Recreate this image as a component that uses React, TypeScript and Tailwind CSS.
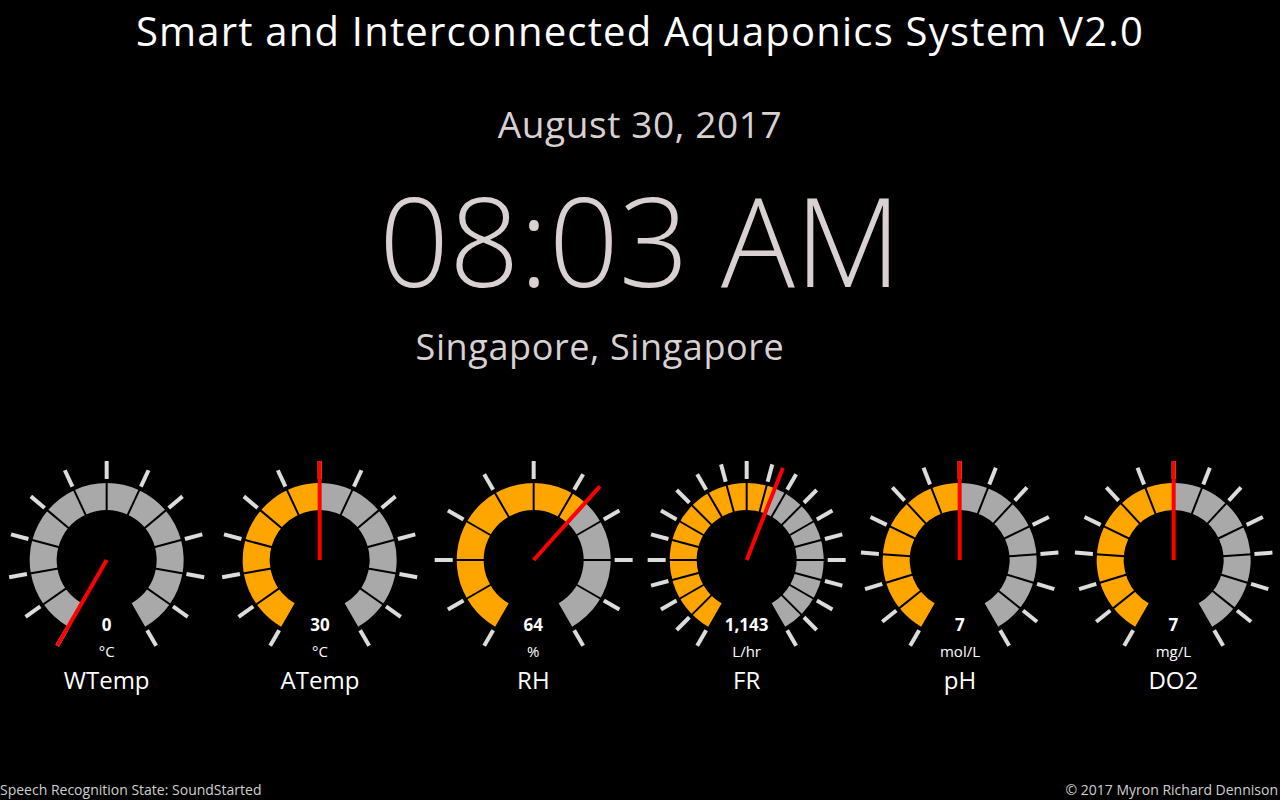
import React from "react";

type GaugeProps = {
  label: string;
  unit: string;
  value: number;
  min: number;
  max: number;
  n: number;
};

const CX = 106.667;
const CY = 100;
const R_IN = 50;
const R_OUT = 77;
const T_IN = 81;
const T_OUT = 99;

function polar(r: number, a: number): [number, number] {
  const rad = (a * Math.PI) / 180;
  return [CX + r * Math.sin(rad), CY - r * Math.cos(rad)];
}

function band(a0: number, a1: number): string {
  if (a1 - a0 < 0.01) return "";
  const large = a1 - a0 > 180 ? 1 : 0;
  const p0 = polar(R_OUT, a0);
  const p1 = polar(R_OUT, a1);
  const p2 = polar(R_IN, a1);
  const p3 = polar(R_IN, a0);
  return `M${p0[0]} ${p0[1]} A${R_OUT} ${R_OUT} 0 ${large} 1 ${p1[0]} ${p1[1]} L${p2[0]} ${p2[1]} A${R_IN} ${R_IN} 0 ${large} 0 ${p3[0]} ${p3[1]} Z`;
}

function Gauge({ label, unit, value, min, max, n }: GaugeProps) {
  const start = -150;
  const end = 150;
  const va = start + ((value - min) / (max - min)) * (end - start);
  const steps = Array.from({ length: n + 1 }, (_, k) => start + (k * (end - start)) / n);
  const needle = polar(T_OUT, va);
  return (
    <div className="flex flex-col items-center">
      <svg className="block w-full h-[190px]" viewBox="0 0 213.333 190">
        <path d={band(start, va)} fill="#ffa500" />
        <path d={band(va, end)} fill="#a9a9a9" />
        {steps.slice(1, n).map((a, i) => {
          const p = polar(R_IN - 1, a);
          const q = polar(R_OUT + 1, a);
          return <line key={"d" + i} x1={p[0]} y1={p[1]} x2={q[0]} y2={q[1]} stroke="#000" strokeWidth={2} />;
        })}
        {steps.map((a, i) => {
          const p = polar(T_IN, a);
          const q = polar(T_OUT, a);
          return <line key={"t" + i} x1={p[0]} y1={p[1]} x2={q[0]} y2={q[1]} stroke="#dcdcdc" strokeWidth={4} />;
        })}
        <line x1={CX} y1={CY} x2={needle[0]} y2={needle[1]} stroke="#ff0000" strokeWidth={4} />
      </svg>
      <div className="-mt-[35px] flex flex-col items-center text-white">
        <div className="text-[17px] leading-[20px] font-bold">{value.toLocaleString("en-US")}</div>
        <div className="mt-[5px] text-[15px] leading-[22px]">{unit}</div>
        <div className="mt-[3px] text-[24px] leading-[30px]">{label}</div>
      </div>
    </div>
  );
}

export default function App() {
  const gauges: GaugeProps[] = [
    { label: "WTemp", unit: "°C", value: 0, min: 0, max: 60, n: 12 },
    { label: "ATemp", unit: "°C", value: 30, min: 0, max: 60, n: 12 },
    { label: "RH", unit: "%", value: 64, min: 0, max: 100, n: 10 },
    { label: "FR", unit: "L/hr", value: 1143, min: 0, max: 2000, n: 20 },
    { label: "pH", unit: "mol/L", value: 7, min: 0, max: 14, n: 14 },
    { label: "DO2", unit: "mg/L", value: 7, min: 0, max: 14, n: 14 },
  ];
  return (
    <div className="w-[1280px] h-[800px] bg-black flex flex-col overflow-hidden font-['Open_Sans','Noto_Sans',sans-serif]">
      <h1 className="mt-[7px] text-center text-white text-[40px] leading-[48px] tracking-[1.2px]">
        Smart and Interconnected Aquaponics System V2.0
      </h1>
      <div className="mt-[47px] text-center text-[#d9d1d1] text-[37px] leading-[44px] tracking-[0.6px]">
        August 30, 2017
      </div>
      <div className="mt-[29px] text-center text-[#d9d1d1] text-[123px] leading-[130px] font-light">08:03 AM</div>
      <div className="mt-[22px] pr-[80px] text-center text-[#d9d1d1] text-[36px] leading-[40px] tracking-[0.6px]">
        Singapore, Singapore
      </div>
      <div className="mt-[93px] grid grid-cols-6">
        {gauges.map((g) => (
          <Gauge key={g.label} {...g} />
        ))}
      </div>
      <div className="mt-auto h-[20px] flex justify-between text-[14px] leading-[20px] text-[#cfcfcf] pr-[2px]">
        <span>Speech Recognition State: SoundStarted</span>
        <span>© 2017 Myron Richard Dennison</span>
      </div>
    </div>
  );
}
